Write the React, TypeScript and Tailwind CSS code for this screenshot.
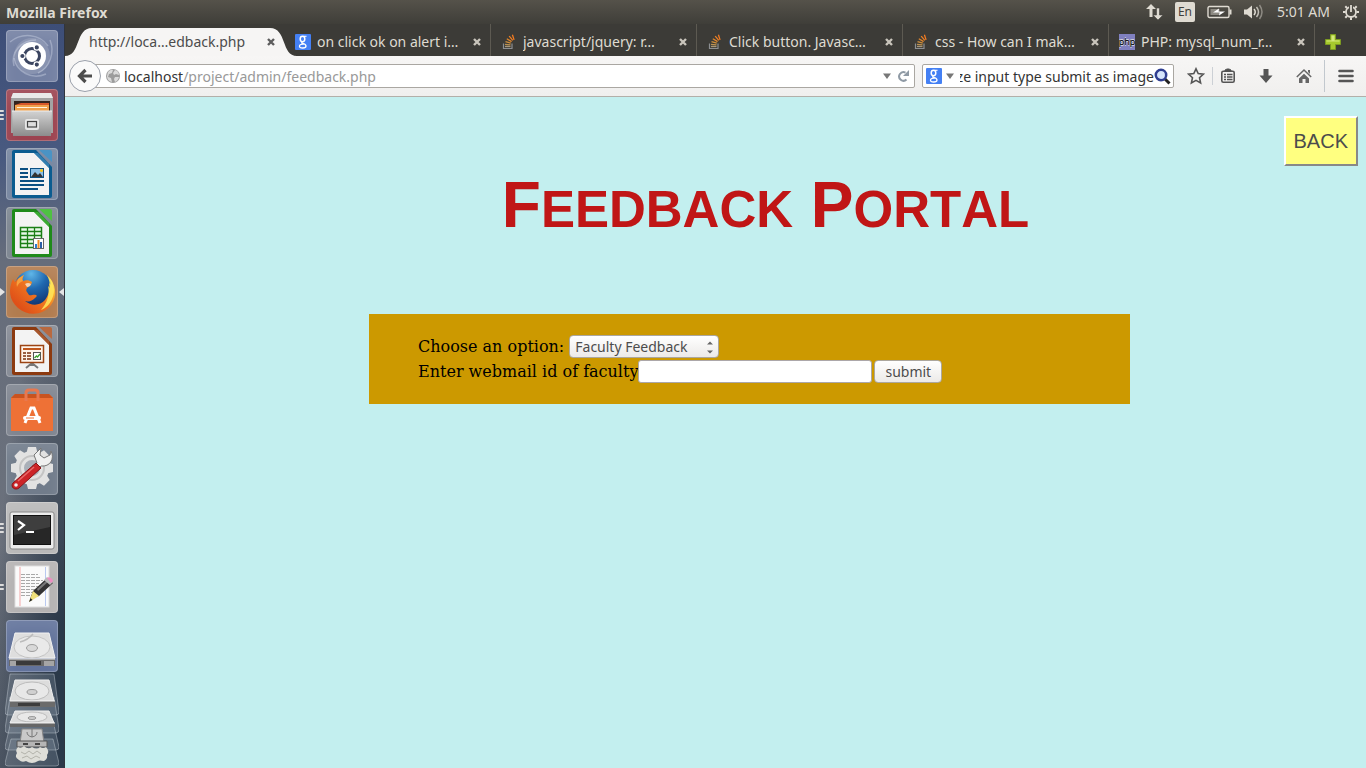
import React, { useEffect, useRef } from 'react';

const ui = "font-['Noto_Sans','Open_Sans',sans-serif]";

/* ---------- Launcher icons (drawn on a 52 x 52 tile) ---------- */

function UbuntuIcon() {
  return (
    <svg viewBox="0 0 52 52" className="size-full">
      <g fill="none" stroke="#dfe6f3" strokeOpacity="0.35" strokeWidth="1.5">
        <path d="M4 12C16 2 34 4 42 16" />
        <path d="M44 10c5 12 0 28-12 33" />
        <path d="M40 44C26 50 10 42 8 28" />
        <path d="M8 36C4 22 16 10 30 10" />
      </g>
      <circle cx="26" cy="26" r="18" fill="#fff" fillOpacity="0.15" />
      <circle cx="26" cy="26" r="14" fill="#fff" />
      <circle cx="26" cy="26" r="7.5" fill="none" stroke="#3b4560" strokeWidth="3" />
      <g stroke="#fff" strokeWidth="1.2" fill="#3b4560">
        <circle cx="16.4" cy="26" r="2.7" />
        <circle cx="30.8" cy="17.4" r="2.7" />
        <circle cx="30.8" cy="34.6" r="2.7" />
      </g>
    </svg>
  );
}

function FilesIcon() {
  return (
    <svg viewBox="0 0 52 52" className="size-full">
      <defs>
        <linearGradient id="cab" x1="0" y1="0" x2="0" y2="1">
          <stop offset="0" stopColor="#d2d2d2" />
          <stop offset="1" stopColor="#8c8c8c" />
        </linearGradient>
      </defs>
      <path d="M7 4h38l2 6v34H5V10z" fill="#a3a3a3" />
      <path d="M7 4h38l2 5H5z" fill="#e9e9e9" />
      <rect x="8" y="12" width="36" height="12" fill="#33231e" />
      <path d="M9 16l6-2h28v9H9z" fill="#d8582a" />
      <rect x="9" y="16" width="34" height="8" fill="#f0a04b" />
      <rect x="11" y="18" width="30" height="1" fill="#fff3dc" />
      <path d="M6 22h40l-1 25H7z" fill="url(#cab)" />
      <path d="M6 22h40" stroke="#eee" />
      <rect x="19" y="30" width="14" height="11" rx="2" fill="#e6e6e6" />
      <rect x="21.5" y="32.5" width="9" height="5.5" fill="#ddd" stroke="#444" strokeWidth="1.2" />
    </svg>
  );
}

function Sheet({ color, fold, children }: { color: string; fold: string; children: React.ReactNode }) {
  return (
    <svg viewBox="0 0 52 52" className="size-full">
      <path d="M8 2h22l16 17v29a2 2 0 0 1-2 2H8a2 2 0 0 1-2-2V4a2 2 0 0 1 2-2z" fill={color} />
      <path d="M9 5h19l15 15v27H9z" fill="#f3f3f3" />
      <path d="M28 5l15 15v-4L32 5z" fill={fold} fillOpacity="0.6" />
      <path d="M33 2h11a2 2 0 0 1 2 2v10z" fill={fold} />
      {children}
    </svg>
  );
}

function WriterIcon() {
  return (
    <Sheet color="#0b5c90" fold="#4a93c4">
      <path d="M14 21h8M14 25h8M14 29h8M14 33h24M14 37h24M14 41h18" stroke="#0b4f82" strokeWidth="2" />
      <rect x="24.5" y="20.5" width="13" height="9" fill="#8dc0e6" stroke="#0b4f82" />
      <path d="M25 29l4-5 3 3 2-2 3 4z" fill="#333" />
      <circle cx="35.5" cy="22.5" r="1.5" fill="#f5c518" />
    </Sheet>
  );
}

function CalcIcon() {
  return (
    <Sheet color="#1f8a1a" fold="#4fc142">
      <rect x="14.5" y="20.5" width="21" height="20" fill="#e9f8e8" stroke="#1b7f16" strokeWidth="1.5" />
      <path d="M14 24.5h22M14 28.500h22M14 32.5h22M14 36.5h22M21.500 20v20M28.500 20v20" stroke="#1b7f16" strokeWidth="1.3" />
      <rect x="27.5" y="31.5" width="10" height="10" fill="#fff" stroke="#666" />
      <rect x="29" y="37" width="2" height="4" fill="#2b7bd0" />
      <rect x="31.5" y="33" width="2" height="8" fill="#f08a24" />
      <rect x="34" y="35" width="2" height="6" fill="#2b5fa8" />
    </Sheet>
  );
}

function FirefoxIcon() {
  return (
    <svg viewBox="0 0 52 52" className="size-full">
      <defs>
        <radialGradient id="ffb" cx="0.45" cy="0.1" r="0.8">
          <stop offset="0" stopColor="#5fb6e8" />
          <stop offset="0.5" stopColor="#1f68b0" />
          <stop offset="1" stopColor="#123a78" />
        </radialGradient>
        <linearGradient id="ffo" x1="1" y1="0.1" x2="0.2" y2="0.8">
          <stop offset="0" stopColor="#fff06a" />
          <stop offset="0.25" stopColor="#f8b02e" />
          <stop offset="0.55" stopColor="#ee7420" />
          <stop offset="1" stopColor="#df5018" />
        </linearGradient>
      </defs>
      <circle cx="27" cy="23" r="19" fill="url(#ffb)" />
      <path
        d="M41 9C50 17 52 30 45 39 38 49 22 51 12 42 3 34 2 23 7 13l2 3c2-3 5-5 9-7-2 3-2 5-1 6 3-1 6-1 9 1l-1 3-4 3c-1 2-1 3 0 4l2 3c2 1 4-1 7 0 1 0 1 2-1 3-3 3-6 4-10 3 6 5 15 5 20-1 4-5 5-11 4-17l2 2c0-4-1-7-4-10z"
        fill="url(#ffo)"
      />
      <path d="M18 9c-2 3-2 5-1 6-3 1-5 3-6 6-1-3 0-7 2-9z" fill="#f7a03c" />
      <path d="M19 18q3-2 6 0-1 3-4 3z" fill="#f6d3b0" />
      <path d="M41 9c7 7 9 16 5 24-2 5-6 9-11 11 6-7 9-15 7-24l2 2c0-5-1-9-3-13z" fill="#ffe75a" fillOpacity="0.85" />
    </svg>
  );
}

function ImpressIcon() {
  return (
    <Sheet color="#8c3a10" fold="#b9693f">
      <path d="M26 38l-6 5M26 38l6 5M26 37v4" stroke="#777" strokeWidth="2" />
      <rect x="14.5" y="20.5" width="23" height="17" fill="#fff4ea" stroke="#9c4414" strokeWidth="1.5" />
      <path d="M17 24h18" stroke="#c0561c" strokeWidth="2" />
      <path d="M17 28h3M17 31h3M17 34h3M21 28h4M21 31h4M21 34h4" stroke="#7a2f0c" strokeWidth="1.6" />
      <rect x="27.5" y="27.5" width="7" height="7" fill="#fff" stroke="#555" />
      <path d="M28.500 33l2-2 1 1 2.500-3" fill="none" stroke="#3aa02c" strokeWidth="1.3" />
    </Sheet>
  );
}

function SoftwareIcon() {
  return (
    <svg viewBox="0 0 52 52" className="size-full">
      <path d="M5 14l4-4h34l4 4v33H5z" fill="#ee7136" />
      <path d="M5 14l4-4h34l4 4z" fill="#c9531f" />
      <path d="M20 17V9q0-3 3-3h6q3 0 3 3v8" fill="none" stroke="#e8784f" strokeWidth="3" />
      <path d="M19 39l6-15h3l6 15" fill="none" stroke="#fff" strokeWidth="3" />
      <rect x="17" y="32" width="18" height="4" rx="2" fill="#fff" />
      <path d="M20 34h8" stroke="#ee7136" />
    </svg>
  );
}

function SettingsIcon() {
  const teeth = [0, 45, 90, 135, 180, 225, 270, 315];
  return (
    <svg viewBox="0 0 52 52" className="size-full">
      {teeth.map((a) => (
        <path key={a} d="M20 12l2-8h8l2 8z" fill="#e2e2e2" transform={`rotate(${a} 26 25)`} />
      ))}
      <circle cx="26" cy="25" r="12.5" fill="#a9afb8" stroke="#e2e2e2" strokeWidth="9" />
      <circle cx="26" cy="25" r="12" fill="none" stroke="#c4c4c4" strokeWidth="2" />
      <path d="M31 20l-3-8 7-7-1 7 4 3 6-3 1-4c4 8-1 16-10 15l-4 4-5-4z" fill="#f0f0f0" stroke="#777" />
      <path d="M30 20L7 40c-3 4 2 8 6 5l22-20z" fill="#cc2428" stroke="#8b1215" />
      <path d="M28 24L12 38" stroke="#e96a6a" strokeWidth="1.5" />
      <circle cx="10" cy="42" r="1.8" fill="#eee" />
    </svg>
  );
}

function TerminalIcon() {
  return (
    <svg viewBox="0 0 52 52" className="size-full">
      <rect x="4" y="10" width="44" height="37" rx="2" fill="#ececec" stroke="#888" />
      <rect x="7.5" y="13.5" width="37" height="29" fill="#272727" stroke="#111" />
      <path d="M8 14h36v11L8 33z" fill="#555" fillOpacity="0.5" />
      <path d="M12 19l6 4-6 5M20 30h8" fill="none" stroke="#fff" strokeWidth="2.2" />
    </svg>
  );
}

function EditorIcon() {
  return (
    <svg viewBox="0 0 52 52" className="size-full">
      <rect x="9" y="5" width="34" height="41" fill="#fafafa" stroke="#ddd" />
      <path d="M14 6v39" stroke="#f3a7a7" />
      <path d="M39.500 6v39" stroke="#b9c9f0" />
      <path d="M15 13.500h17M15 16.5h20M15 19.5h22M15 22.5h18M15 25.5h18M15 28.500h16M15 31.5h14M15 34.5h11" stroke="#a8a8a8" strokeDasharray="4 1" />
      <path d="M24 38l3-8 14-13 6 5-14 13z" fill="#333" />
      <path d="M31 28L42 18l1.500 1.500L32 30z" fill="#777" />
      <path d="M23 41l4-11 6 5z" fill="#f0e07a" />
      <path d="M23 41l1.500-4 2 2z" fill="#222" />
      <path d="M38 19l3-3 6 5-3 3z" fill="#b9b9b9" />
      <path d="M41 17q3-2 6 2 0 2-2 3z" fill="#ec8fc2" />
    </svg>
  );
}

function Drive() {
  return (
    <svg viewBox="0 0 52 40" width="52" height="40">
      <path d="M9 1h34l6 25H3z" fill="#dedede" stroke="#f2f2f2" />
      <ellipse cx="26" cy="15" rx="18" ry="11" fill="#e9e9e9" stroke="#c4c4c4" />
      <ellipse cx="26" cy="16" rx="5.5" ry="3.5" fill="#d8d8d8" stroke="#9d9d9d" />
      <path d="M14 10q8-2 13-8" fill="none" stroke="#bbb" strokeWidth="1.5" />
      <path d="M3 27h46v7H3z" fill="#6a6a6a" />
      <path d="M3 27h46" stroke="#eee" />
      <path d="M4 29h6v5H4zM38 29h10v5H38z" fill="#a5a5a5" />
      <path d="M10 29h25v4H10z" fill="#3a3a3a" />
    </svg>
  );
}

function DriveIcon() {
  return (
    <span className="flex size-full items-end">
      <Drive />
    </span>
  );
}

function FoldedStack() {
  return (
    <svg viewBox="0 0 54 94" width="54" height="94">
      <g fill="#aab4c4" fillOpacity="0.22" stroke="#d5dbe4" strokeOpacity="0.4">
        <path d="M5 1h44l5 38q0 3-3 3H3q-3 0-3-3z" />
        <path d="M5 24h44l5 32q0 4-3 4H3q-3 0-3-4z" />
        <path d="M6 48h42l6 26q0 3-3 3H3q-3 0-3-3z" />
        <path d="M6 66h42l6 24q0 3-3 3H3q-3 0-3-3z" />
      </g>
      <path d="M17 56h20l2 14H15z" fill="#c9c9c9" stroke="#888" />
      <path d="M27 56v8m-5-5q0 4 5 5 5-1 5-5" fill="none" stroke="#777" />
      <path d="M12 68h30v6H12z" fill="#b5b5b5" stroke="#555" />
      <path d="M18 71h5M30 71h5" stroke="#444" strokeWidth="2" />
      <path d="M13 74q3 2 6-1 4 4 8 1 5 3 8 0 3 2 6 0 4 4 1 8 1 4-3 6-5-1-6 0-6 4-12 0-4 2-7-1-5-2-2-7-2-3 1-6z" fill="#deded8" />
      <path d="M16 79l4 2 4-3 4 3 4-3 4 3M17 85l5-2 4 3 5-3 4 2" fill="none" stroke="#b3b3ab" />
      <path d="M10 38h34l5 12H5z" fill="#dcdcdc" stroke="#f0f0f0" />
      <ellipse cx="27" cy="44" rx="15" ry="5" fill="#e8e8e8" stroke="#bdbdbd" />
      <ellipse cx="27" cy="45" rx="4" ry="1.5" fill="#ccc" stroke="#999" />
      <path d="M5 50h45v4H5z" fill="#666" />
      <path d="M5 50h45" stroke="#eee" />
      <path d="M10 7h34l5 21H5z" fill="#dcdcdc" stroke="#f0f0f0" />
      <ellipse cx="27" cy="18" rx="17" ry="9" fill="#e8e8e8" stroke="#bdbdbd" />
      <ellipse cx="27" cy="19" rx="5" ry="2.5" fill="#d0d0d0" stroke="#999" />
      <path d="M5 28h45v6H5z" fill="#6b6b6b" />
      <path d="M5 28h45" stroke="#eee" />
      <path d="M13 30h22v3H13z" fill="#3c3c3c" />
    </svg>
  );
}

type LauncherItem = { name: string; tile: string; pips: number; focused?: boolean; icon: React.ReactNode };

const launcher: LauncherItem[] = [
  { name: 'Search', tile: 'bg-[#7481a3]', pips: 0, icon: <UbuntuIcon /> },
  { name: 'Files', tile: 'bg-[#9c4350]', pips: 3, icon: <FilesIcon /> },
  { name: 'Writer', tile: 'bg-[#76859f]', pips: 0, icon: <WriterIcon /> },
  { name: 'Calc', tile: 'bg-[#7c8590]', pips: 0, icon: <CalcIcon /> },
  { name: 'Firefox', tile: 'bg-[#b27c4f]', pips: 1, focused: true, icon: <FirefoxIcon /> },
  { name: 'Impress', tile: 'bg-[#858a94]', pips: 0, icon: <ImpressIcon /> },
  { name: 'Software', tile: 'bg-[#7f8590]', pips: 0, icon: <SoftwareIcon /> },
  { name: 'Settings', tile: 'bg-[#717c8b]', pips: 0, icon: <SettingsIcon /> },
  { name: 'Terminal', tile: 'bg-[#b9b9b9]', pips: 3, icon: <TerminalIcon /> },
  { name: 'Editor', tile: 'bg-[#b5b3b3]', pips: 2, icon: <EditorIcon /> },
  { name: 'Drive', tile: 'bg-[#62739b]', pips: 0, icon: <DriveIcon /> },
];

function Launcher() {
  return (
    <nav
      aria-label="Launcher"
      className="flex w-[65px] shrink-0 flex-col gap-[7px] overflow-hidden border-r border-[#30343d] bg-[radial-gradient(ellipse_70px_420px_at_100%_92%,#2b3949_20%,transparent),linear-gradient(#3d4e78,#495a80_18%,#666d7b_32%,#6b717c_70%,#4d5663)] pt-[6px]"
    >
      {launcher.map((item) => (
        <div key={item.name} className="flex h-[52px] shrink-0 items-center">
          <span className="flex w-[6px] flex-col gap-[2px]">
            {item.focused ? (
              <svg width="5" height="8" viewBox="0 0 5 8"><path d="M0 0l5 4-5 4z" fill="#e4e4e4" /></svg>
            ) : (
              <>
                {item.pips > 0 && <i className="block h-[2px] w-[4px] rounded-r bg-[#dcdcdc]" />}
                {item.pips > 1 && <i className="block h-[2px] w-[4px] rounded-r bg-[#dcdcdc]" />}
                {item.pips > 2 && <i className="block h-[2px] w-[4px] rounded-r bg-[#dcdcdc]" />}
              </>
            )}
          </span>
          <button
            type="button"
            aria-label={item.name}
            className={`size-[52px] shrink-0 overflow-hidden rounded-[4px] shadow-[inset_0_0_0_1px_rgba(255,255,255,0.22),inset_0_10px_14px_rgba(255,255,255,0.1)] ${item.tile}`}
          >
            {item.icon}
          </button>
          {item.focused && (
            <svg width="6" height="8" viewBox="0 0 6 8"><path d="M6 0L1 4l5 4z" fill="#e4e4e4" /></svg>
          )}
        </div>
      ))}
      <div className="-mt-[6px] flex shrink-0 pl-[5px]">
        <FoldedStack />
      </div>
    </nav>
  );
}

/* ---------- Top panel ---------- */

function TopPanel() {
  return (
    <header className={`flex h-6 shrink-0 items-center bg-linear-to-b from-[#55524a] to-[#3f3e39] px-[6px] text-[#dfdbd2] ${ui}`}>
      <span className="text-[14px] font-bold">Mozilla Firefox</span>
      <div className="ml-auto flex items-center">
        <svg width="18" height="18" viewBox="0 0 18 18" fill="#dfdbd2">
          <path d="M6 1l5 5H7.500v8h-3V6H1z" />
          <path d="M13 17l-5-5h3.500V5h3v7H18z" stroke="#47453f" strokeWidth="0.6" />
        </svg>
        <span className="ml-3 flex h-5 w-5 items-center justify-center rounded-[2px] bg-[#dfdbd2] text-[12px] text-[#3f3e39]">En</span>
        <svg className="ml-3" width="26" height="14" viewBox="0 0 26 14">
          <rect x="1" y="1.5" width="21" height="11" rx="1.5" fill="none" stroke="#dfdbd2" strokeWidth="1.4" />
          <rect x="22.5" y="4.5" width="2" height="5" fill="#dfdbd2" />
          <rect x="3.5" y="4" width="9" height="6" fill="#dfdbd2" fillOpacity="0.45" />
          <path d="M6 7.500l6-4-0.500 3H18l-6 4 0.500-3z" fill="#fff" />
        </svg>
        <svg className="ml-[10px]" width="22" height="16" viewBox="0 0 22 16">
          <path d="M1 5.500h3l5-4v13l-5-4H1z" fill="#dfdbd2" />
          <g fill="none" stroke="#dfdbd2" strokeWidth="1.5">
            <path d="M11 5q2.500 3 0 6" />
            <path d="M13.500 3q4 5 0 10" strokeOpacity="0.8" />
            <path d="M16.500 1q5 7 0 14" strokeOpacity="0.45" />
          </g>
        </svg>
        <time className="ml-3 text-[14px] leading-5">5:01 AM</time>
        <svg className="ml-3" width="18" height="18" viewBox="0 0 18 18">
          <g stroke="#dfdbd2" fill="none">
            <circle cx="9" cy="9" r="5" strokeWidth="1.8" />
            <path
              d="M3.500 9H1M14.500 9H17M9 14.500V17M5 5L3.300 3.300M13 5l1.700-1.700M5 13l-1.700 1.700M13 13l1.700 1.700"
              strokeWidth="2"
            />
          </g>
          <path d="M7 1h4v7H7z" fill="#4b4942" />
          <path d="M9 2v7" stroke="#dfdbd2" strokeWidth="1.8" />
        </svg>
      </div>
    </header>
  );
}

/* ---------- Tabs ---------- */

function GoogleIcon() {
  return (
    <span className="flex size-4 shrink-0 items-center justify-center rounded-[1px] bg-[#4480f4] text-white">
      <svg width="16" height="16" viewBox="0 0 16 16" fill="none" stroke="#fff">
        <ellipse cx="7.5" cy="5" rx="2.3" ry="2.7" strokeWidth="1.5" />
        <path d="M8.500 2.300h3" strokeWidth="1.1" />
        <path d="M7.500 7.700q-1.500 1 0 1.700 3.500 0.800 3.500 2.600 0 2-3.300 2-3.200 0-3.200-1.800 0-2 4-2" strokeWidth="1.3" />
      </svg>
    </span>
  );
}

function StackIcon() {
  return (
    <svg className="shrink-0" width="16" height="16" viewBox="0 0 16 16" fill="none">
      <path d="M2.500 9.500v5h8.500v-5" stroke="#8d8f92" strokeWidth="1.2" />
      <path d="M4 12.500h5.500" stroke="#a8977a" strokeWidth="1.3" />
      <path d="M4 10.300l5.500 0.600" stroke="#bd9250" strokeWidth="1.3" />
      <path d="M4.500 7.600l5.300 1.500" stroke="#cf8f3c" strokeWidth="1.3" />
      <path d="M5.800 4.800l4.800 2.800" stroke="#e0872c" strokeWidth="1.3" />
      <path d="M8.200 2.200l3.600 4.200" stroke="#f08024" strokeWidth="1.3" />
      <path d="M11.400 0.700l1.700 5.200" stroke="#f47b20" strokeWidth="1.3" />
    </svg>
  );
}

function PhpIcon() {
  return (
    <span className="flex size-4 shrink-0 items-center justify-center overflow-hidden bg-[#8080c0] text-[9px] leading-none text-black [text-shadow:0_1px_#ddd,0_-1px_#ddd]">
      php
    </span>
  );
}

function CloseIcon({ color }: { color: string }) {
  return (
    <svg width="8" height="8" viewBox="0 0 8 8">
      <path d="M1 1l6 6M7 1L1 7" stroke={color} strokeWidth="2.4" />
    </svg>
  );
}

const tabs = [
  { title: 'on click ok on alert i…', icon: <GoogleIcon /> },
  { title: 'javascript/jquery: r…', icon: <StackIcon /> },
  { title: 'Click button. Javasc…', icon: <StackIcon /> },
  { title: 'css - How can I mak…', icon: <StackIcon /> },
  { title: 'PHP: mysql_num_r…', icon: <PhpIcon /> },
];

function TabStrip() {
  return (
    <div role="tablist" className="flex h-8 bg-[#3c3b37] text-[14px]">
      <div role="tab" aria-selected="true" className="relative flex w-[220px] shrink-0 items-center pt-[3px] pr-[10px] pl-[24px] text-[#4c4c4c]">
        <svg className="absolute bottom-0 left-0" width="232" height="28" viewBox="0 0 232 28">
          <path d="M0 28C16 28 10 0 27 0h178c17 0 11 28 27 28z" fill="#f6f5f4" />
        </svg>
        <span className="relative flex-1 truncate">http://loca…edback.php</span>
        <button type="button" aria-label="Close tab" className="relative">
          <CloseIcon color="#5d5d5d" />
        </button>
      </div>
      {tabs.map((t) => (
        <div
          key={t.title}
          role="tab"
          aria-selected="false"
          className="relative flex max-w-[206px] min-w-0 flex-1 items-center gap-[6px] border-r border-[#5d5a52] pt-[3px] pr-[9px] pl-[10px] text-[#dfdbd2]"
        >
          {t.icon}
          <span className="flex-1 overflow-hidden whitespace-nowrap">{t.title}</span>
          <button type="button" aria-label="Close tab">
            <CloseIcon color="#c9c5bc" />
          </button>
        </div>
      ))}
      <button type="button" aria-label="New tab" className="ml-[10px] pt-[3px]">
        <svg width="16" height="16" viewBox="0 0 16 16">
          <path d="M5.500 0.500h5v5h5v5h-5v5h-5v-5h-5v-5h5z" fill="#a6c92d" stroke="#7c9b20" />
          <path d="M6.500 1.500h3v5h5v1h-13v-1h5z" fill="#d3e87c" />
        </svg>
      </button>
    </div>
  );
}

/* ---------- Navigation bar ---------- */

function NavBar() {
  const search = useRef<HTMLInputElement>(null);
  useEffect(() => {
    if (search.current) search.current.scrollLeft = search.current.scrollWidth;
  }, []);
  return (
    <div className="flex h-[41px] items-center border-b border-[#b3afa9] bg-linear-to-b from-[#f7f6f5] to-[#f0efee] pl-1 text-[14px]">
      <button
        type="button"
        aria-label="Back"
        className="z-10 flex size-8 shrink-0 items-center justify-center rounded-full border border-[#9aa0ab] bg-[#fafafa]"
      >
        <svg width="16" height="16" viewBox="0 0 16 16">
          <path d="M8.500 2L2.500 8l6 6M3 8h12" fill="none" stroke="#4d4d4d" strokeWidth="3.2" />
        </svg>
      </button>
      <div className="-ml-2 flex h-6 min-w-0 flex-1 items-center rounded-r-[2px] border border-[#aaa7a2] bg-white pr-1 pl-3">
        <svg className="shrink-0" width="14" height="14" viewBox="0 0 14 14">
          <circle cx="7" cy="7" r="7" fill="#9c9c9c" />
          <path d="M2 3q3-3 5-2l-1 3-3 1-1 3 3 1 1 4Q1 12 1 7zM9 1q4 1 4 5l-3-1-2 1-1-2zM9 8l4 0q-1 4-4 5l-1-3z" fill="#dadada" />
        </svg>
        <label htmlFor="address" className="ml-[4px] text-[#333]">localhost</label>
        <input id="address" type="text" defaultValue="/project/admin/feedback.php" className="min-w-0 flex-1 bg-transparent text-[#999] outline-none" />
        <svg className="mr-[6px]" width="8" height="6" viewBox="0 0 8 6"><path d="M0 0.500h8L4 6z" fill="#777" /></svg>
        <button type="button" aria-label="Reload">
          <svg width="13" height="14" viewBox="0 0 13 14">
            <path d="M9.500 10.500A4.300 4.300 0 1 1 8.500 3.600" fill="none" stroke="#8f9aa5" strokeWidth="2" />
            <path d="M12 1v6H6z" fill="#8f9aa5" />
          </svg>
        </button>
      </div>
      <div className="ml-[7px] flex h-6 w-[252px] shrink-0 items-center rounded-[2px] border border-[#aaa7a2] bg-white pr-[2px] pl-[3px]">
        <GoogleIcon />
        <svg className="ml-[4px] shrink-0" width="8" height="6" viewBox="0 0 8 6"><path d="M0 0.500h8L4 6z" fill="#777" /></svg>
        <input
          ref={search}
          type="text"
          aria-label="Search"
          defaultValue="ize input type submit as image"
          className="ml-[6px] min-w-0 flex-1 bg-transparent text-[#333] outline-none"
        />
        <svg className="shrink-0" width="17" height="17" viewBox="0 0 17 17">
          <path d="M10.500 10.500l5 5" stroke="#222" strokeWidth="3" />
          <circle cx="7" cy="7" r="5.2" fill="#d5e4fb" stroke="#2f3e91" strokeWidth="2.5" />
        </svg>
      </div>
      <div className="flex h-full shrink-0 items-center pl-[13px]">
        <button type="button" aria-label="Bookmark">
          <svg width="18" height="18" viewBox="0 0 18 18">
            <path d="M9 1.800l2.200 4.800 5.200 0.600-3.900 3.500 1.100 5.200L9 13.300l-4.600 2.600 1.100-5.200L1.600 7.200l5.200-0.600z" fill="none" stroke="#555" strokeWidth="1.6" />
          </svg>
        </button>
        <i className="mx-[7px] h-[18px] w-px bg-[#ccd0d5]" />
        <button type="button" aria-label="Bookmarks list">
          <svg width="16" height="16" viewBox="0 0 16 16">
            <rect x="1.8" y="3.3" width="12.4" height="11" rx="1.5" fill="none" stroke="#555" strokeWidth="1.6" />
            <path d="M5 3V2l2-1h2l2 1v1z" fill="#555" stroke="#555" />
            <path d="M4 6.500h2M4 9h2M4 11.500h2M7 6.500h5.500M7 9h5.500M7 11.500h5.500" stroke="#555" strokeWidth="1.3" />
          </svg>
        </button>
        <button type="button" aria-label="Downloads" className="ml-[22px]">
          <svg width="16" height="16" viewBox="0 0 16 16"><path d="M5.500 1h5v6.500h4L8 15 1.500 7.500h4z" fill="#555" /></svg>
        </button>
        <button type="button" aria-label="Home" className="ml-[22px]">
          <svg width="16" height="16" viewBox="0 0 16 16">
            <path d="M0.800 9L8 2l7.200 7" fill="none" stroke="#666" strokeWidth="1.5" />
            <path d="M12 2h2v4l-2-2zM3 10.500l5-4.800 5 4.800V15h-3.500v-4h-3v4H3z" fill="#666" />
          </svg>
        </button>
        <i className="mr-[13px] ml-[12px] h-8 w-px bg-[#c2c8ce]" />
        <button type="button" aria-label="Menu" className="mr-[12px]">
          <svg width="16" height="16" viewBox="0 0 16 16">
            <path d="M1.500 3h13M1.500 8h13M1.500 13h13" stroke="#555" strokeWidth="2.6" strokeLinecap="round" />
          </svg>
        </button>
      </div>
    </div>
  );
}

/* ---------- Page ---------- */

const control =
  "border border-[#aca79e] rounded-[4px] bg-linear-to-b from-white to-[#eceae8] text-[14px] text-[#4c4c4c]";

function FeedbackPage() {
  return (
    <main className="flex flex-1 flex-col bg-[#c3efef] px-2 pt-[19px]">
      <button
        type="button"
        className="h-[50px] self-end border-2 border-t-white border-r-[#888] border-b-[#888] border-l-white bg-[#ffff80] px-2 font-['Liberation_Sans',sans-serif] text-[20px] text-[#4c4c4c]"
      >
        BACK
      </button>
      <h1 className="mt-px pl-[100px] text-center font-['Liberation_Sans',sans-serif] text-[64px] leading-[76px] font-bold text-[#c01616] [font-kerning:none]">
        F<span className="text-[51px]">EEDBACK</span> P<span className="text-[51px]">ORTAL</span>
      </h1>
      <form
        onSubmit={(e) => e.preventDefault()}
        className="mt-[66px] mr-[228px] ml-[296px] flex flex-col gap-[2px] bg-[#cc9900] pt-[21px] pr-4 pb-[21px] pl-[49px] font-['DejaVu_Serif',serif] text-[16px] text-black"
      >
        <div className="flex h-[23px] items-center">
          <label htmlFor="option">Choose an option:</label>
          <span className="relative ml-[5px] flex">
            <select id="option" className={`h-[23px] w-[150px] appearance-none pl-[5px] ${control} ${ui}`}>
              <option>Faculty Feedback</option>
            </select>
            <svg className="pointer-events-none absolute top-[6px] right-[6px]" width="6" height="13" viewBox="0 0 6 13">
              <path d="M0 3.500L3 0.500l3 3zM0 9.500l3 3 3-3z" fill="#666" />
            </svg>
          </span>
        </div>
        <div className="flex h-[23px] items-center">
          <label htmlFor="webmail">Enter webmail id of faculty</label>
          <input
            id="webmail"
            type="text"
            className={`h-[23px] w-[234px] rounded-[3px] border border-[#aca7a9] bg-white px-1 text-[14px] outline-none ${ui}`}
          />
          <button type="submit" className={`ml-[2px] h-[23px] px-[10px] leading-none ${control} ${ui}`}>
            submit
          </button>
        </div>
      </form>
    </main>
  );
}

export default function App() {
  return (
    <div className="flex min-h-screen flex-col">
      <TopPanel />
      <div className="flex flex-1">
        <Launcher />
        <div className="flex min-w-0 flex-1 flex-col">
          <div className={ui}>
            <TabStrip />
            <NavBar />
          </div>
          <FeedbackPage />
        </div>
      </div>
    </div>
  );
}
